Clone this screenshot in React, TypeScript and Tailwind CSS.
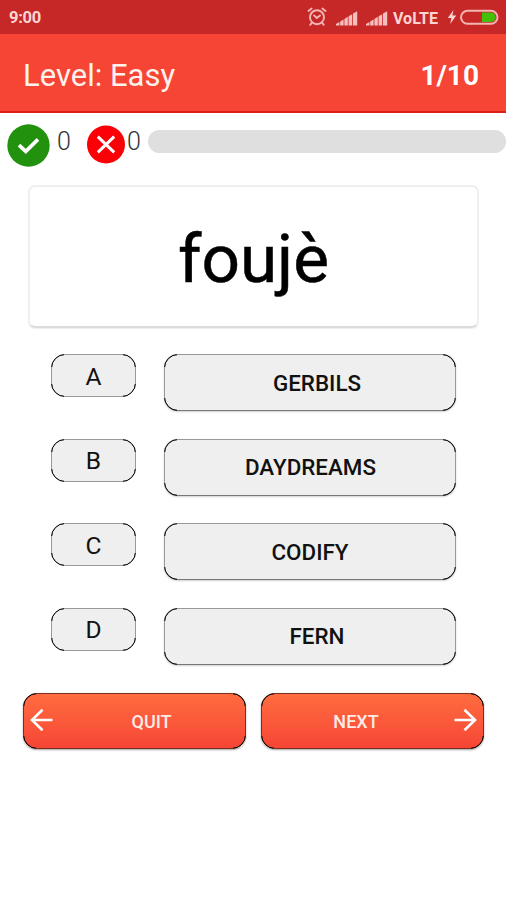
import React from 'react'
import { clsx } from 'clsx'

const options = [
  { letter: 'A', word: 'GERBILS', pad: 'pl-[14px]' },
  { letter: 'B', word: 'DAYDREAMS', pad: 'pl-[1px]' },
  { letter: 'C', word: 'CODIFY', pad: 'pl-0' },
  { letter: 'D', word: 'FERN', pad: 'pl-[14px]' },
]

const corner = 'block shrink-0 w-10 h-10 rounded-[14px] border border-black'

// darker strokes on the rounded corners of a button
const Corners = () => (
  <>
    <span className="absolute -left-px -top-px w-[13px] h-[13px] overflow-hidden flex"><span className={corner} /></span>
    <span className="absolute -right-px -top-px w-[13px] h-[13px] overflow-hidden flex justify-end"><span className={corner} /></span>
    <span className="absolute -left-px -bottom-px w-[13px] h-[13px] overflow-hidden flex items-end"><span className={corner} /></span>
    <span className="absolute -right-px -bottom-px w-[13px] h-[13px] overflow-hidden flex items-end justify-end"><span className={corner} /></span>
  </>
)

const Signal = () => (
  <svg width="22" height="16" viewBox="0 0 22 16" fill="#f5bfbd">
    <path d="M0 15.5V14L3.4 12V15.5ZM4.2 15.5V11.6L7.6 9.4V15.5ZM8.4 15.5V9L11.8 6.8V15.5ZM12.6 15.5V6.3L16.2 4.2V15.5ZM17 15.5V3.6L21.2 1.2V15.5Z" />
  </svg>
)

const StatusBar = () => (
  <div className="flex items-center justify-between h-[34px] bg-[#c62828] pl-[9px] pr-[7px] text-[#fbd5d3]">
    <p className="text-[16.5px] font-bold tracking-[-0.3px] pt-[3px]">9:00</p>
    <div className="flex items-center">
      <svg width="20" height="20" viewBox="0 0 20 20" fill="none" stroke="#f3b6b5" strokeWidth="1.9" strokeLinecap="round">
        <circle cx="10" cy="10.2" r="7" />
        <path d="M1.5 4L4.6 1.6M18.5 4L15.4 1.6M7 8.4L9.8 11L13 8.6M4.8 15.9L3.2 17.8M15.2 15.9L16.8 17.8" />
      </svg>
      <span className="ml-[9px] mt-[2px] flex gap-[8px]"><Signal /><Signal /></span>
      <p className="text-[16px] font-bold ml-[5px] pt-[3px] w-[46px] whitespace-nowrap">VoLTE</p>
      <svg className="ml-[8px]" width="10" height="16" viewBox="0 0 10 16" fill="#fbd5d3">
        <path d="M6.5 1L0.8 9H4.4L3.2 15L9.2 6.6H5.4Z" />
      </svg>
      <svg className="ml-[3px]" width="39" height="16" viewBox="0 0 39 16">
        <rect x="1" y="1.8" width="36.5" height="13" rx="6.5" fill="#c62828" stroke="#f4b5b2" strokeWidth="2" />
        <path d="M22 3.6H31A4.7 4.7 0 0 1 31 13H22Z" fill="#43c00a" />
      </svg>
    </div>
  </div>
)

const App = () => {
  return (
    <div className="w-[506px] h-[900px] bg-white overflow-hidden font-[Roboto,sans-serif] text-black">
      <StatusBar />
      <header className="flex items-center justify-between h-[79px] bg-[#f64435] border-b-2 border-[#dc1f18] pl-[23px] pr-[27px] pt-[7px] text-[#fff1ec]">
        <h1 className="text-[31px]">Level: Easy</h1>
        <p className="text-[28px] font-bold text-white">1/10</p>
      </header>

      <section className="flex items-start h-[72px] pt-[11px] pl-[7px] text-[25px] font-light text-[#333]">
        <svg width="43" height="43" viewBox="0 0 43 43">
          <circle cx="21.5" cy="21.5" r="21.2" fill="#22910d" />
          <path d="M12 21.2L18.8 27.4L31 15.4" fill="none" stroke="#fff" strokeWidth="3.6" />
        </svg>
        <p className="ml-[7px] w-[30px] leading-[36px]">0</p>
        <svg className="mt-[1px]" width="38" height="40" viewBox="0 0 38 40">
          <circle cx="19" cy="19.5" r="19" fill="#fb0007" />
          <path d="M10.8 11.6L27.2 27.4M27.2 11.6L10.8 27.4" stroke="#fff" strokeWidth="3" />
        </svg>
        <p className="ml-[2px] w-[21px] leading-[36px]">0</p>
        <div className="flex-1 h-[23px] mt-[6px] rounded-full bg-[#dfdfdf]" />
      </section>

      <div className="flex items-center justify-center ml-[28px] mr-[27px] h-[143px] rounded-[7px] border-2 border-[#efefef] border-b-[#dcdcdc] shadow-[0_1px_1px_#eeeeee] text-[67.5px]">
        <p className="mt-[4px] [-webkit-text-stroke:0.5px_black]">foujè</p>
      </div>

      <ul className="flex flex-col gap-[27.4px] mt-[26.4px] pl-[51px]">
        {options.map(({ letter, word, pad }) => (
          <li key={letter} className="flex items-start gap-[28px]">
            <div className="relative flex items-center justify-center w-[85px] h-[43px] rounded-[14px] border border-[#999] bg-[#efefef] text-[24.5px] pt-[3px] text-[#111]">
              <Corners />
              {letter}
            </div>
            <button className={clsx('relative flex items-center justify-center w-[292px] h-[57px] rounded-[14px] border border-[#999] border-b-[#777] bg-[#efefef] shadow-[0_1px_2px_#00000030] pt-[2px] text-[22.4px] font-medium text-[#111]', pad)}>
              <Corners />
              {word}
            </button>
          </li>
        ))}
      </ul>

      <div className="flex gap-[15px] mt-[28px] pl-[23px] text-[18px] font-medium text-[#ffece6]">
        <button className="relative flex items-center w-[223px] h-[56px] rounded-[14px] border border-[#7a3020] bg-linear-to-b from-[#ff6c40] to-[#f64435] bg-origin-border shadow-[0_1px_2px_#00000060] pl-[6px]">
          <Corners />
          <svg className="-mt-[1px]" width="24" height="24" viewBox="0 0 24 24" fill="none" stroke="#fff" strokeWidth="2.6">
            <path d="M22.5 12H2.5M12.5 1.8L2 12L12.5 22.2" />
          </svg>
          <span className="flex-1 pl-[4px] pt-[2px] text-center">QUIT</span>
        </button>
        <button className="relative flex items-center w-[223px] h-[56px] rounded-[14px] border border-[#7a3020] bg-linear-to-b from-[#ff6c40] to-[#f64435] bg-origin-border shadow-[0_1px_2px_#00000060] pr-[6px]">
          <Corners />
          <span className="flex-1 pr-[3px] pt-[2px] text-center">NEXT</span>
          <svg className="-mt-[1px]" width="24" height="24" viewBox="0 0 24 24" fill="none" stroke="#fff" strokeWidth="2.6">
            <path d="M1.5 12H21.5M11.5 1.8L22 12L11.5 22.2" />
          </svg>
        </button>
      </div>
    </div>
  )
}

export default App
